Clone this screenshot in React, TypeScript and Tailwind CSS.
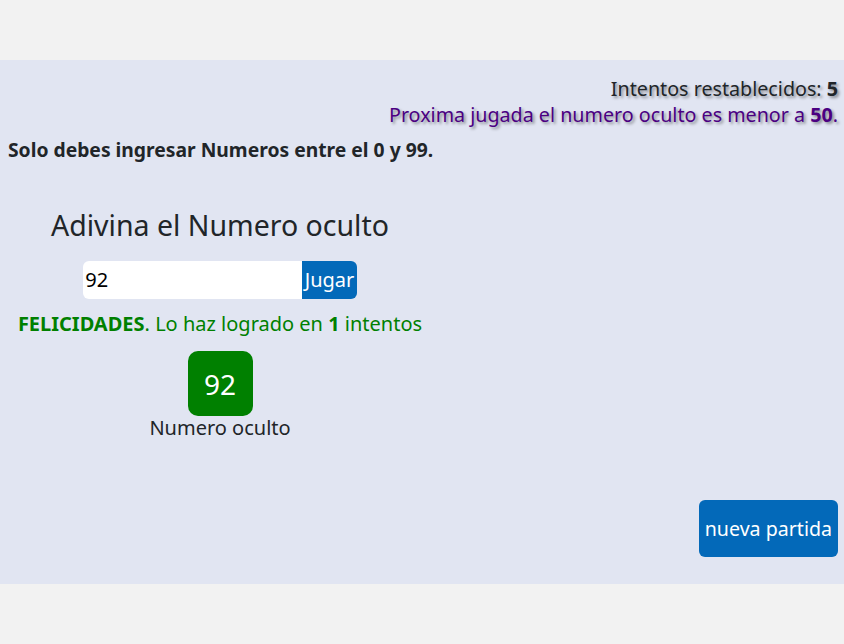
export default function App() {
  return (
    <div className="min-h-[644px] bg-[#f2f2f2] pt-[60px] font-['Noto_Sans',sans-serif] text-[#212529]">
      <div className="flex h-[524px] flex-col bg-[#e1e5f2] px-[6px]">
        <div className="pt-[16px] text-right text-[19.7px] leading-[26px] [text-shadow:2px_2px_3px_rgba(0,0,0,0.4)]">
          <div>
            Intentos restablecidos: <b>5</b>
          </div>
          <div className="text-[#4b0082]">
            Proxima jugada el numero oculto es menor a <b>50</b>.
          </div>
        </div>
        <p className="mt-[9px] pl-[2px] text-[19.3px] font-bold leading-[26px]">
          Solo debes ingresar Numeros entre el 0 y 99.
        </p>
        <div className="mt-[42px] flex w-[428px] flex-col items-center">
          <h2 className="text-[28.5px] leading-[40px]">Adivina el Numero oculto</h2>
          <div className="mt-[16px] flex h-[38px]">
            <input
              readOnly
              value="92"
              className="w-[219px] rounded-l-[6px] bg-white px-[2px] text-[20px] text-black outline-none"
            />
            <button className="rounded-r-[6px] bg-[#0369b9] px-[2.5px] text-[20px] text-white">Jugar</button>
          </div>
          <p className="mt-[12px] text-[20px] leading-[26px] text-[#008000]">
            <b>FELICIDADES</b>. Lo haz logrado en <b>1</b> intentos
          </p>
          <div className="mt-[14px] flex h-[65px] w-[65px] items-center justify-center rounded-[10px] bg-[#008000] text-[28px] text-white">
            92
          </div>
          <p className="text-[20px] leading-[24px]">Numero oculto</p>
        </div>
        <div className="mt-auto mb-[27px] flex justify-end">
          <button className="h-[57px] rounded-[6px] bg-[#0369b9] px-[6px] text-[19.6px] text-white">nueva partida</button>
        </div>
      </div>
    </div>
  );
}
